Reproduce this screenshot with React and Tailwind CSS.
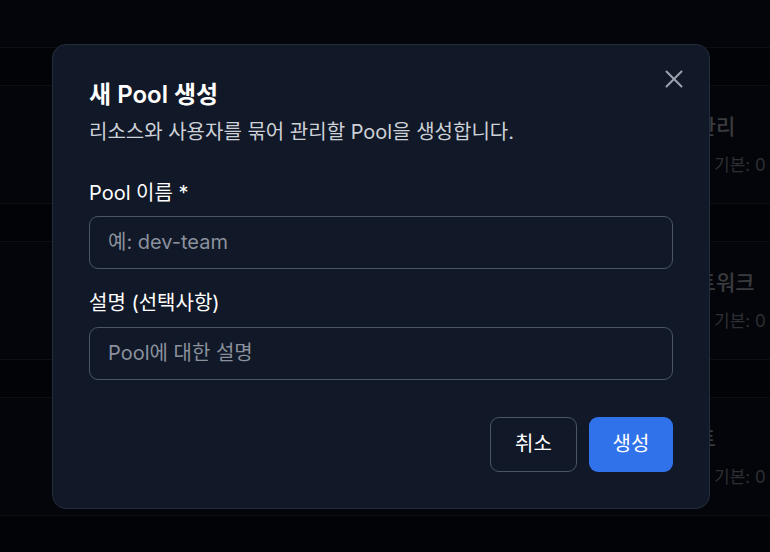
import { useState } from 'react';

const rows = [
  { title: '리소스 관리', note: '할당: 2개', desc: '기본: 0 GB' },
  { title: '가상 네트워크', note: '할당: 1개', desc: '기본: 0 GB' },
  { title: '웹 게이트', note: '할당: 3개', desc: '기본: 0 GB' },
];

function BackgroundList() {
  return (
    <div className="-mt-[71px] flex flex-col gap-[37px]">
      <div className="h-[119px] border-y border-[#0c0e13] bg-[#04050a]" />
      {rows.map((row) => (
        <div
          key={row.title}
          className="flex h-[119px] flex-col justify-center border-y border-[#0c0e13] bg-[#04050a] pl-[628px]"
        >
          <div className="ml-[5px] whitespace-nowrap text-[21px] font-medium leading-7 text-[#3a3b3e]">
            {row.title}
          </div>
          <div className="mt-[12px] flex whitespace-nowrap text-[17px] leading-6 text-[#2d2f33]">
            <span className="w-[86px] shrink-0 overflow-hidden">{row.note}</span>
            <span>{row.desc}</span>
          </div>
        </div>
      ))}
    </div>
  );
}

function CreatePoolDialog() {
  const [name, setName] = useState('');
  const [desc, setDesc] = useState('');

  return (
    <div className="relative w-[658px] rounded-[14px] border border-[#252c3b] bg-[#111827] p-9">
      <button className="absolute right-[24px] top-[23px] block text-[#9ca3af]">
        <svg className="block" width="22" height="22" viewBox="0 0 22 22" fill="none">
          <path
            d="M3.5 3.5L18.5 18.5M18.5 3.5L3.5 18.5"
            stroke="currentColor"
            strokeWidth="2"
            strokeLinecap="round"
          />
        </svg>
      </button>

      <h2 className="text-[24px] font-semibold leading-7 text-white">새 Pool 생성</h2>
      <p className="mt-[9px] text-[20px] leading-7 text-[#cdd1d8]">
        리소스와 사용자를 묶어 관리할 Pool을 생성합니다.
      </p>

      <label className="mt-[34px] block text-[20px] leading-[26px] text-white">
        Pool 이름 *
      </label>
      <input
        value={name}
        onChange={(e) => setName(e.target.value)}
        placeholder="예: dev-team"
        className="mt-[10px] block h-[53px] w-full rounded-[9px] border border-[#4b5563] bg-transparent px-[18px] text-[20px] text-white outline-none placeholder:text-[#8a919d]"
      />

      <label className="mt-[21px] block text-[20px] leading-[26px] text-white">
        설명 (선택사항)
      </label>
      <input
        value={desc}
        onChange={(e) => setDesc(e.target.value)}
        placeholder="Pool에 대한 설명"
        className="mt-[11px] block h-[53px] w-full rounded-[9px] border border-[#4b5563] bg-transparent px-[18px] text-[20px] text-white outline-none placeholder:text-[#8a919d]"
      />

      <div className="mt-[37px] flex justify-end gap-3">
        <button className="h-[55px] w-[87px] rounded-[9px] border border-[#4b5563] text-[20px] text-white">
          취소
        </button>
        <button className="h-[55px] w-[84px] rounded-[9px] bg-[#3072ea] text-[20px] text-white">
          생성
        </button>
      </div>
    </div>
  );
}

export default function App() {
  return (
    <div
      className="relative h-[552px] overflow-hidden bg-[#020306]"
      style={{ fontFamily: "Inter, 'Noto Sans CJK KR', sans-serif" }}
    >
      <BackgroundList />
      <div className="fixed inset-0 flex items-center justify-center pr-2">
        <CreatePoolDialog />
      </div>
    </div>
  );
}
